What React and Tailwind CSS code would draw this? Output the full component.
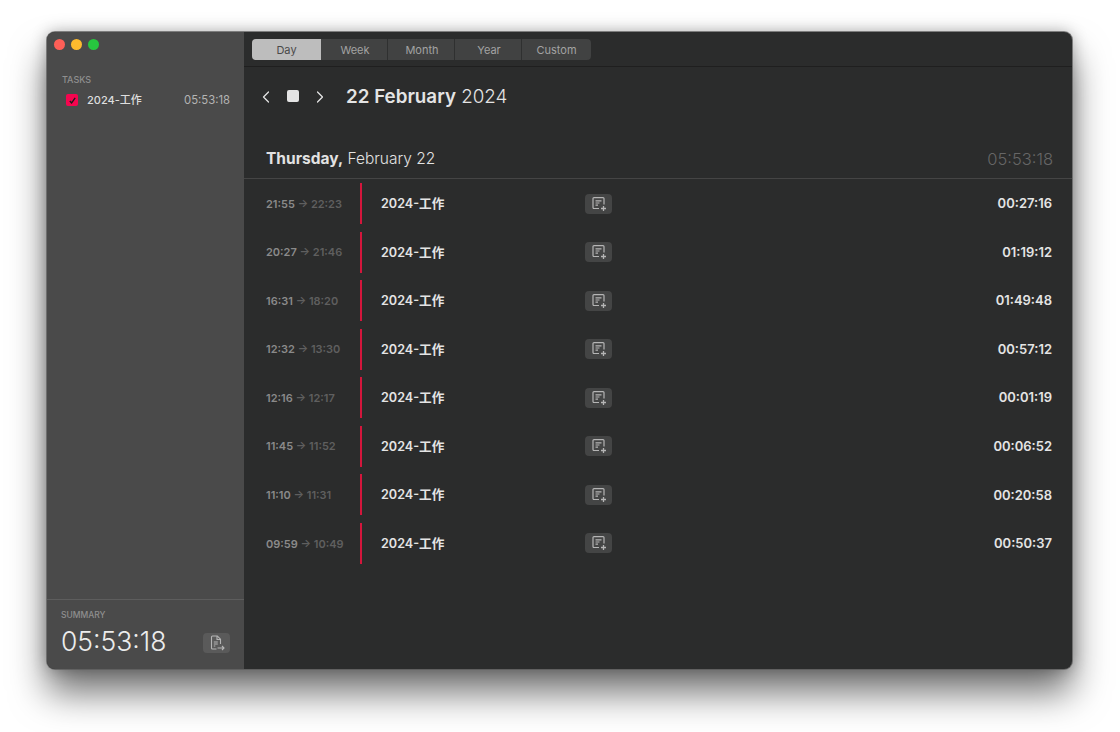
import { ChevronLeft, ChevronRight } from "lucide-react";

const tabs = ["Day", "Week", "Month", "Year", "Custom"];

const entries = [
  { from: "21:55", to: "22:23", total: "00:27:16" },
  { from: "20:27", to: "21:46", total: "01:19:12" },
  { from: "16:31", to: "18:20", total: "01:49:48" },
  { from: "12:32", to: "13:30", total: "00:57:12" },
  { from: "12:16", to: "12:17", total: "00:01:19" },
  { from: "11:45", to: "11:52", total: "00:06:52" },
  { from: "11:10", to: "11:31", total: "00:20:58" },
  { from: "09:59", to: "10:49", total: "00:50:37" },
];

const NoteAddIcon = () => (
  <svg width="16" height="16" viewBox="0 0 16 16" fill="none" stroke="#b5b5b5" strokeWidth="1.2">
    <path d="M8 12.5H3a1 1 0 0 1-1-1V2.6a1 1 0 0 1 1-1h9a1 1 0 0 1 1 1V8.5" />
    <path d="M4.5 4.8h6M4.5 7h4M4.5 9.2h2.5" />
    <path d="M12.5 10v5M10 12.5h5" strokeWidth="1.3" />
  </svg>
);

const ExportIcon = () => (
  <svg width="16" height="16" viewBox="0 0 16 16" fill="none" stroke="#b5b5b5" strokeWidth="1.1">
    <path d="M7.5 14h-4a1 1 0 0 1-1-1V2a1 1 0 0 1 1-1h4.8L11.5 4.2V9" />
    <path d="M8 1v3.5h3.5" />
    <path d="M4.8 7h4M4.8 9h4M4.8 11h1.5" />
    <path d="M8.5 13h6.5M13 11l2 2-2 2" />
  </svg>
);

const Row = ({ entry }) => (
  <div className="flex h-[41px] items-center mb-[7.55px]">
    <div className="w-[116px] pl-[22px] pt-[1px] text-[11px] font-semibold whitespace-nowrap">
      <span className="text-[#8a8a8a]">{entry.from}</span>
      <span className="text-[#5f5f5f]"> → {entry.to}</span>
    </div>
    <div className="w-[2px] h-full bg-[#d4163c]" />
    <div className="w-[223px] pl-[19px] pt-[2px] text-[12.6px] font-semibold text-[#e4e4e4]">2024-工作</div>
    <div className="w-[27px] h-[20px] rounded-[4px] bg-[#444545] flex items-center justify-center">
      <NoteAddIcon />
    </div>
    <div className="flex-1 pr-[20px] pt-[1px] text-right text-[13px] font-semibold text-[#e4e4e4]">{entry.total}</div>
  </div>
);

export default function App() {
  return (
    <div
      className="w-[1120px] h-[732px] bg-white pl-[47px] pt-[32px] overflow-hidden"
      style={{ fontFamily: "Inter, 'Noto Sans CJK SC', sans-serif" }}
    >
      <div className="flex w-[1025px] h-[637px] rounded-[8px] overflow-hidden bg-[#2b2c2c] shadow-[0_0_0_1px_rgba(90,90,90,0.7),0_24px_36px_rgba(0,0,0,0.55),0_0_16px_rgba(0,0,0,0.3)]">
        {/* Sidebar */}
        <aside className="w-[197px] shrink-0 flex flex-col bg-[#4a4a4a]">
          <div className="flex gap-[6px] pl-[7px] pt-[7px]">
            <span className="w-[11px] h-[11px] rounded-full bg-[#fe5f57]" />
            <span className="w-[11px] h-[11px] rounded-full bg-[#febb2e]" />
            <span className="w-[11px] h-[11px] rounded-full bg-[#27c73f]" />
          </div>
          <div className="mt-[23px] pl-[15px] text-[9px] leading-[14px] font-medium text-[#8f8f8f]">TASKS</div>
          <div className="flex items-center mt-[3px] h-[20px] pl-[19px] pr-[14px]">
            <span className="w-[12px] h-[12px] rounded-[2px] bg-[#f5054f] flex items-center justify-center">
              <svg width="9" height="9" viewBox="0 0 10 10" fill="none" stroke="#1a1a1a" strokeWidth="1.5">
                <path d="M2 5.5l2 2.2L8 2" />
              </svg>
            </span>
            <span className="ml-[9px] text-[11px] font-medium text-[#dedede]">2024-工作</span>
            <span className="ml-auto text-[11.3px] text-[#b4b4b4]">05:53:18</span>
          </div>
          <div className="mt-auto h-[70px] border-t border-[#5d5d5d] pl-[14px] pr-[14px]">
            <div className="mt-[9px] text-[8.5px] leading-[12px] font-medium text-[#8f8f8f]">SUMMARY</div>
            <div className="flex items-center justify-between mt-[3px]">
              <span className="text-[26.5px] leading-[34px] font-light text-[#ececec]">05:53:18</span>
              <div className="w-[27px] h-[20px] mt-[3px] rounded-[4px] bg-[#5a5a5a] flex items-center justify-center">
                <ExportIcon />
              </div>
            </div>
          </div>
        </aside>

        {/* Main */}
        <main className="flex-1 flex flex-col">
          <div className="h-[35px] shrink-0 flex items-center pl-[8px] border-b border-[#1f1f1f]">
            <div className="flex h-[21px] rounded-[4px] overflow-hidden bg-[#414242]">
              {tabs.map((tab, i) => (
                <div
                  key={tab}
                  className={`flex items-center justify-center pt-[2px] text-[11px] ${
                    i === 0
                      ? "w-[69px] bg-[#bdbdbd] text-[#4a4a4a]"
                      : i === 4
                        ? "w-[69px] text-[#a3a3a3]"
                        : "w-[67px] pl-[2px] text-[#a3a3a3] border-r border-[#2f3030]"
                  }`}
                >
                  {tab}
                </div>
              ))}
            </div>
          </div>

          <div className="h-[60px] shrink-0 flex items-center pl-[12px]">
            <ChevronLeft size={20} strokeWidth={1.5} className="-mt-[1px] text-[#e4e4e4]" />
            <span className="ml-[11px] -mt-[2px] w-[12px] h-[12px] rounded-[2px] bg-[#e4e4e4]" />
            <ChevronRight size={20} strokeWidth={1.5} className="ml-[11px] -mt-[1px] text-[#e4e4e4]" />
            <h1 className="ml-[16px] text-[18.8px] text-[#e4e4e4]">
              <span className="font-semibold">22 February</span> <span className="font-light">2024</span>
            </h1>
          </div>

          <div className="h-[52px] shrink-0 flex items-end justify-between pl-[22px] pr-[19px] pb-[7px] border-b border-[#454545]">
            <div className="text-[15.5px] leading-[24px] text-[#e2e2e2]">
              <span className="font-bold">Thursday,</span> <span className="font-light">February 22</span>
            </div>
            <div className="text-[16.5px] leading-[24px] font-light text-[#666666]">05:53:18</div>
          </div>

          <div className="pt-[4px]">
            {entries.map((entry) => (
              <Row key={entry.from} entry={entry} />
            ))}
          </div>
        </main>
      </div>
    </div>
  );
}
